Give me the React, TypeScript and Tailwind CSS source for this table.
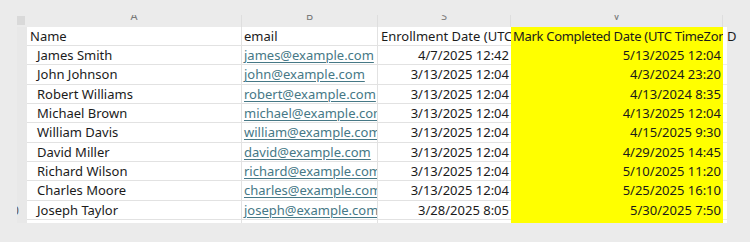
const rows = [
  ["James Smith", "james@example.com", "4/7/2025 12:42", "5/13/2025 12:04"],
  ["John Johnson", "john@example.com", "3/13/2025 12:04", "4/3/2024 23:20"],
  ["Robert Williams", "robert@example.com", "3/13/2025 12:04", "4/13/2024 8:35"],
  ["Michael Brown", "michael@example.com", "3/13/2025 12:04", "4/13/2025 12:04"],
  ["William Davis", "william@example.com", "3/13/2025 12:04", "4/15/2025 9:30"],
  ["David Miller", "david@example.com", "3/13/2025 12:04", "4/29/2025 14:45"],
  ["Richard Wilson", "richard@example.com", "3/13/2025 12:04", "5/10/2025 11:20"],
  ["Charles Moore", "charles@example.com", "3/13/2025 12:04", "5/25/2025 16:10"],
  ["Joseph Taylor", "joseph@example.com", "3/28/2025 8:05", "5/30/2025 7:50"],
];

const cols = "grid-cols-[10px_215px_136px_133px_212px_4px]";

function ColLetter({ ch }: { ch: string }) {
  return (
    <div className="h-[12px] overflow-hidden border-r border-[#dedede] flex justify-center">
      <span className="text-[11px] leading-[12px] text-[#7a7a7a] mt-[-5px]">{ch}</span>
    </div>
  );
}

export default function App() {
  return (
    <div
      className="w-[750px] h-[242px] bg-[#ebebeb] pt-[15px] pl-[17px] overflow-hidden text-[#1b1b1b]"
      style={{ fontFamily: '"Noto Sans", sans-serif' }}
    >
      <div className={`grid ${cols} w-[710px]`}>
        {/* column letters */}
        <div className="h-[12px] pt-[1px]">
          <div className="w-[8px] h-[9px] bg-[#d9d9d9]" />
        </div>
        <ColLetter ch="A" />
        <ColLetter ch="B" />
        <ColLetter ch="S" />
        <ColLetter ch="V" />
        <div className="h-[12px]" />

        {/* header row */}
        <div className="h-[19px] bg-[#e8e8e8]" />
        <div className="h-[19px] bg-white border-r border-b border-[#e2e2e2] pl-[3px] text-[13px] leading-[19px] whitespace-nowrap overflow-hidden">
          Name
        </div>
        <div className="h-[19px] bg-white border-r border-b border-[#e2e2e2] pl-[2px] text-[13px] leading-[19px] whitespace-nowrap overflow-hidden">
          email
        </div>
        <div className="h-[19px] bg-white border-b border-[#e2e2e2] pl-[3px] text-[13px] leading-[19px] whitespace-nowrap overflow-hidden">
          Enrollment Date (UTC TimeZone)
        </div>
        <div className="h-[19px] bg-[#ffff00] pl-[2px] text-[13px] leading-[19px] tracking-[-0.3px] whitespace-nowrap overflow-hidden">
          Mark Completed Date (UTC TimeZone)
        </div>
        <div className="h-[19px] bg-white text-[13px] leading-[19px] whitespace-nowrap overflow-visible">
          <span className="ml-[4px]">D</span>
        </div>

        {rows.map((r, i) => (
          <Row key={r[1]} r={r} last={i === rows.length - 1} />
        ))}

        {/* partial trailing row */}
        <div className="h-[3px] bg-[#e8e8e8]" />
        <div className="h-[3px] bg-white border-r border-[#e2e2e2]" />
        <div className="h-[3px] bg-white border-r border-[#e2e2e2]" />
        <div className="h-[3px] bg-white" />
        <div className="h-[3px] bg-[#ffff00]" />
        <div className="h-[3px] bg-white" />
      </div>
    </div>
  );
}

function Row({ r, last }: { r: string[]; last: boolean }) {
  return (
    <>
      <div className="h-[19.35px] bg-[#e8e8e8] text-[12px] leading-[19px] text-[#555] overflow-hidden whitespace-nowrap">
        {last && <span className="ml-[-5px]">0</span>}
      </div>
      <div className="h-[19.35px] bg-white border-r border-b border-[#e2e2e2] pl-[10px] text-[13px] leading-[19px] whitespace-nowrap overflow-hidden">
        {r[0]}
      </div>
      <div className="h-[19.35px] bg-white border-r border-b border-[#e2e2e2] pl-[2px] text-[13px] leading-[19px] whitespace-nowrap overflow-hidden text-[#467886] underline decoration-[1px] underline-offset-[2px]">
        {r[1]}
      </div>
      <div className="h-[19.35px] bg-white border-b border-[#e2e2e2] pr-[2px] text-right text-[13px] leading-[19px] whitespace-nowrap overflow-hidden">
        {r[2]}
      </div>
      <div className="h-[19.35px] bg-[#ffff00] pr-[2px] text-right text-[13px] leading-[19px] whitespace-nowrap overflow-hidden">
        {r[3]}
      </div>
      <div className="h-[19.35px] bg-white border-b border-[#ececec]" />
    </>
  );
}
